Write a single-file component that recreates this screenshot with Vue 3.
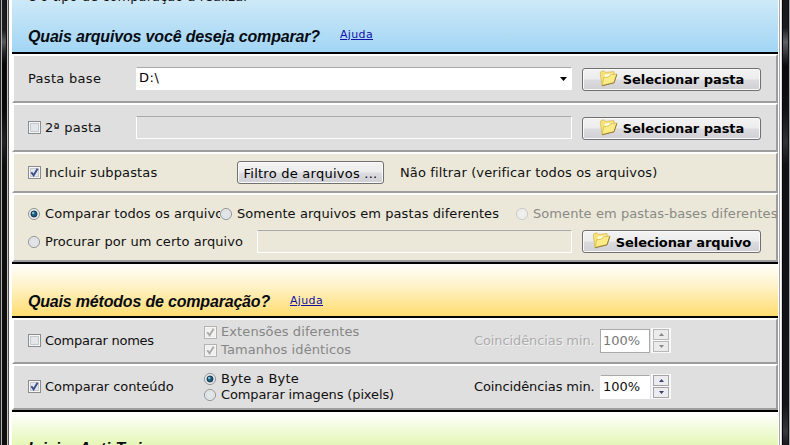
<script setup>
import { ref, h } from 'vue'

const base = ref('D:\\')

const FolderIcon = () =>
  h('svg', { width: 19, height: 17, viewBox: '0 0 19 17' }, [
    h('path', { d: 'M1.2 3 L2 1.6 L5 0.8 L6.5 2.4 L15 1.6 L15.3 4.5 L13.5 13 L3 15.6 Z', fill: '#f7e277', stroke: '#d3bb66', 'stroke-width': 0.8 }),
    h('path', { d: 'M6 4.6 L14 3.4 L13 8 L5 9 Z', fill: '#fffce6' }),
    h('path', { d: 'M3 15.4 L4.8 7.6 L9.5 7 L11.4 4.8 L17.8 4 L15 12.6 Z', fill: '#fbec85', stroke: '#d4b74e', 'stroke-width': 0.8 }),
    h('path', { d: 'M3 15.8 L15 12.9 L17.9 4.4', fill: 'none', stroke: '#8f7636', 'stroke-width': 0.9 }),
  ])

const CheckBox = (props) =>
  h('svg', { width: 13, height: 13, viewBox: '0 0 13 13' }, [
    h('rect', { x: 0.5, y: 0.5, width: 12, height: 12, fill: '#f6f6f6', stroke: props.off ? '#b3b3b3' : '#8b8c8e' }),
    h('rect', { x: 2.5, y: 2.5, width: 8, height: 8, fill: props.off ? '#f4f4f4' : '#e4e7ea', stroke: props.off ? '#ececec' : '#c5c9ce' }),
    props.on
      ? h('path', { d: 'M3.3 6.2 L5.6 9.3 L9.6 2.8', fill: 'none', stroke: props.off ? '#a9a9a9' : '#3c4d8c', 'stroke-width': 1.9 })
      : null,
  ])
CheckBox.props = { on: Boolean, off: Boolean }

const RadioDot = (props) =>
  h('svg', { width: 12, height: 12, viewBox: '0 0 12 12' }, [
    h('circle', { cx: 6, cy: 6, r: 5.5, fill: '#f5f5f5', stroke: props.off ? '#c6c6c6' : '#8d8f91' }),
    h('circle', { cx: 6, cy: 6, r: 3.9, fill: props.off ? '#f0f0ee' : '#e3e6e9', stroke: props.off ? '#e6e6e6' : '#d3d7da', 'stroke-width': 0.7 }),
    props.on ? h('circle', { cx: 6, cy: 6, r: 3, fill: '#1d5c7c', stroke: '#14304a', 'stroke-width': 0.9 }) : null,
    props.on ? h('circle', { cx: 5.2, cy: 5, r: 1.2, fill: '#7cc4de' }) : null,
  ])
RadioDot.props = { on: Boolean, off: Boolean }

const arrows = ['M0 3 L2.5 0 L5 3 Z', 'M0 0 L2.5 3 L5 0 Z']
const methods = [
  {
    name: 'Comparar nomes', cls: 'nomes', on: false, off: true, type: CheckBox,
    options: [
      { text: 'Extensões diferentes', cls: 'ext', on: true },
      { text: 'Tamanhos idênticos', cls: 'tam', on: true },
    ],
  },
  {
    name: 'Comparar conteúdo', cls: 'conteudo', on: true, off: false, type: RadioDot,
    options: [
      { text: 'Byte a Byte', cls: 'byte', on: true },
      { text: 'Comparar imagens (pixels)', cls: 'img', on: false },
    ],
  },
]
</script>

<template>
  <div class="window">
    <div class="edge left"></div>
    <main>
      <header class="band blue">
        <p class="intro">e o tipo de comparação a realizar</p>
        <div class="title">
          <h2 class="t1">Quais arquivos você deseja comparar?</h2>
          <a>Ajuda</a>
        </div>
      </header>

      <section class="row gray h45">
        <span class="name base">Pasta base</span>
        <div class="field combo">
          <span>{{ base }}</span>
          <svg width="7" height="4" viewBox="0 0 7 4"><path d="M0 0H7L3.5 4Z" /></svg>
        </div>
        <button class="pick"><FolderIcon /><b class="sp">Selecionar pasta</b></button>
      </section>

      <section class="row gray h45">
        <label class="name"><CheckBox /><span class="p2">2ª pasta</span></label>
        <div class="field empty"></div>
        <button class="pick"><FolderIcon /><b class="sp">Selecionar pasta</b></button>
      </section>

      <section class="row beige h37">
        <label class="sub"><CheckBox on /><span class="isub">Incluir subpastas</span></label>
        <button class="filter"><span>Filtro de arquivos ...</span></button>
        <span class="nofilter">Não filtrar (verificar todos os arquivos)</span>
      </section>

      <section class="row beige scope">
        <div class="line">
          <label class="all"><RadioDot on /><span>Comparar todos os arquivos</span></label>
          <label class="diff"><RadioDot /><span>Somente arquivos em pastas diferentes</span></label>
          <label class="bases"><RadioDot off /><span>Somente em pastas-bases diferentes</span></label>
        </div>
        <div class="line second">
          <label class="one"><RadioDot /><span>Procurar por um certo arquivo</span></label>
          <div class="field empty short"></div>
          <button class="pick"><FolderIcon /><b class="sa">Selecionar arquivo</b></button>
        </div>
      </section>

      <header class="band yellow">
        <div class="title">
          <h2 class="t2">Quais métodos de comparação?</h2>
          <a>Ajuda</a>
        </div>
      </header>

      <section v-for="m in methods" :key="m.name" class="row gray method" :class="{ off: m.off }">
        <label class="mname"><CheckBox :on="m.on" /><span :class="m.cls">{{ m.name }}</span></label>
        <div class="options">
          <label v-for="o in m.options" :key="o.text">
            <component :is="m.type" :on="o.on" :off="m.off" /><span :class="o.cls">{{ o.text }}</span>
          </label>
        </div>
        <span class="coin">Coincidências min.</span>
        <div class="pct"><span>100%</span></div>
        <div class="spin">
          <i v-for="a in arrows" :key="a"><svg width="5" height="3" viewBox="0 0 5 3"><path :d="a" /></svg></i>
        </div>
      </section>

      <header class="band green">
        <div class="title"><h2 class="t3">Iniciar Anti-Twin</h2></div>
      </header>
    </main>
    <div class="edge right"></div>
  </div>
</template>

<style>
body { margin: 0; overflow: hidden; background: #fff; }
</style>

<style scoped>
* { box-sizing: border-box; }
.window {
  display: flex;
  width: 790px;
  height: 445px;
  overflow: hidden;
  background: #fff;
  font: 13px/16px "DejaVu Sans", sans-serif;
  color: #101010;
}
svg { flex: none; display: block; }
.edge { flex: none; width: 12px; }
.left {
  background:
    linear-gradient(90deg, #222 0 1px, #b4b2ae 1px 2px, transparent 2px 6px, #111 6px 7px, #c8c4ba 7px 8px, #555 8px 9px, #fff 9px 12px),
    linear-gradient(#17191c 0, #1a1c20 30px, #565a5e 42px, #24262a 52px, #060607 64px, #08090a 110px, #202327 142px, #0c0d0f 165px, #0d0e10 100%);
}
.right {
  background:
    linear-gradient(90deg, #fff 0 1px, #a7a7ab 1px 2px, #fff 2px 3px, #d8d8da 3px 4px, #08080a 4px 5px, transparent 5px 10px, #101012 10px 11px, #aaa 11px 12px),
    linear-gradient(#17191c 0, #1a1c20 28px, #5e6267 42px, #2a2c31 56px, #0b0b0d 66px, #111216 110px, #2e3136 142px, #101114 165px, #141519 405px, #36393e 432px, #18191c 445px);
}
main { flex: none; width: 766px; height: 445px; overflow: hidden; }
.band {
  display: flex;
  flex-direction: column;
  justify-content: space-between;
  height: 54px;
  padding-left: 16px;
  border-bottom: 2px solid #000;
}
.blue { background: linear-gradient(#cde9f7, #a2d5f5); }
.yellow { height: 56px; border-top: 2px solid #000; background: linear-gradient(#fffefa, #fff3cc 40%, #ffdd70); justify-content: flex-end; }
.green { height: 53px; border: 0; border-top: 2px solid #000; background: linear-gradient(#fff, #e4f7b4 34px, #d4f088); justify-content: flex-end; }
.intro { margin: -11px 0 0; letter-spacing: 0.06px; }
.title { display: flex; align-items: flex-start; gap: 20px; height: 25px; }
.yellow .title, .green .title { height: 24px; }
h2 { margin: 0; font: italic bold 16px/20px "Liberation Sans", sans-serif; color: #070b12; white-space: nowrap; }
.t1 { width: 292px; letter-spacing: -0.165px; }
.t2 { width: 242px; letter-spacing: -0.185px; }
.t3 { letter-spacing: 0; }
a { font-size: 11px; line-height: 16px; color: #1212a8; text-decoration: underline; letter-spacing: 0.35px; }
.yellow a { line-height: 18px; }
.row {
  display: flex;
  align-items: center;
  padding-left: 14px;
  border: solid;
  border-width: 2px;
  border-color: #fff #9d9d9d #9d9d9d #fff;
  white-space: nowrap;
}
.gray { background: #dfdfdf; }
.beige { background: #ebe8d9; }
.h45 { height: 49px; }
.h37 { height: 41px; }
label { display: flex; align-items: center; gap: 4px; }
.name { width: 108px; flex: none; }
.field { flex: none; width: 436px; height: 23px; border: 1px solid #fff; border-top-color: #a9a9a9; }
.combo { display: flex; align-items: center; justify-content: space-between; padding: 0 4px 2px 2px; background: #fff; color: #000; letter-spacing: 0.5px; }
.combo svg { margin-top: 2px; }
.short { width: 315px; }
button {
  display: flex;
  align-items: center;
  justify-content: center;
  height: 23px;
  padding: 0;
  border: 1px solid #707070;
  border-radius: 3px;
  background: linear-gradient(#f3f3f3, #ececec 48%, #dcdce0 52%, #d0d0d4);
  box-shadow: inset 0 0 0 1px #fafafa;
  font: inherit;
  color: #000;
}
.pick { flex: none; width: 179px; margin: 1px 0 0 10px; gap: 5px; }
.pick svg { margin-bottom: 2px; }
.pick b { padding-top: 2px; }
.base { letter-spacing: 0.3px; }
.p2 { letter-spacing: 0.25px; }
.isub { letter-spacing: 0.12px; }
.sp { letter-spacing: -0.05px; }
.sa { letter-spacing: -0.1px; }
.sub { width: 209px; }
.filter { width: 147px; margin-right: 16px; letter-spacing: 0.25px; }
.filter span { padding-top: 2px; }
.nofilter { letter-spacing: 0.14px; }
.scope { display: block; height: 69px; padding-top: 10px; }
.line { display: flex; align-items: center; height: 18px; letter-spacing: 0.07px; }
.second { height: 24px; margin-top: 6px; }
.line label { gap: 5px; flex: none; }
.all { width: 192px; }
.all span { width: 177px; overflow: hidden; }
.diff { width: 296px; }
.bases { width: 262px; color: #8a8a84; }
.one { width: 229px; padding-top: 2px; }
.method { height: 46px; padding-bottom: 1px; }
.mname { width: 176px; }
.nomes { letter-spacing: -0.25px; }
.conteudo { letter-spacing: -0.06px; }
.options { width: 270px; display: flex; flex-direction: column; gap: 2px; }
.options { padding-top: 1px; }
.method:not(.off) .options { gap: 0; }
.method:not(.off) .options label { gap: 5px; }
.ext, .tam { letter-spacing: 0.1px; }
.byte { letter-spacing: 0.22px; }
.img { letter-spacing: -0.12px; }
.coin { width: 126px; letter-spacing: -0.1px; }
.pct { display: flex; align-items: center; width: 50px; height: 24px; padding-left: 2px; background: #fff; border: 1px solid #fff; border-top-color: #a9a9a9; }
.spin { display: flex; flex-direction: column; gap: 1px; margin-left: 1px; padding: 1px 2px; background: #f8f8f8; }
.spin i { display: flex; align-items: center; justify-content: center; width: 16px; height: 11px; border: 1px solid #a3a3a8; background: #ececf0; fill: #39406a; }
.off .options { color: #868686; }
.off .coin { color: #acacac; text-shadow: 1px 1px #f2f2f2; }
.off .pct { color: #777; border-color: #aaa; }
.off .spin i { fill: #888; border-color: #b8b8b8; background: #ebebeb; }
</style>
